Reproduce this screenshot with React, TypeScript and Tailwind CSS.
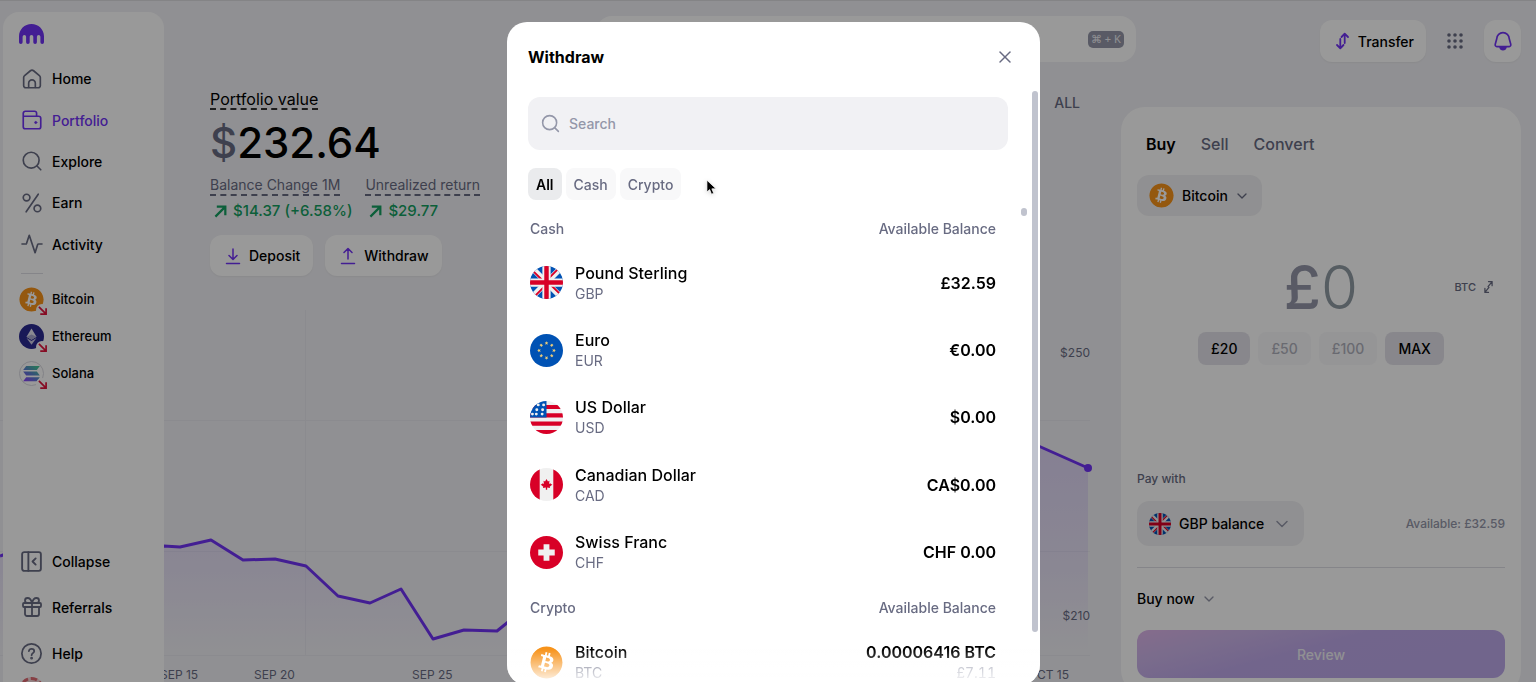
import React, { useId } from "react";
import { ChevronDown, Gift, PanelLeftClose, Search, X } from "lucide-react";
import { FaBitcoin } from "react-icons/fa";

type IconProps = { className?: string };

const stroke = {
  fill: "none",
  stroke: "currentColor",
  strokeWidth: 2,
  strokeLinecap: "round" as const,
  strokeLinejoin: "round" as const,
};

function Logo() {
  return (
    <svg viewBox="0 0 25 20" className="h-5 w-[25px] fill-[#7132f5]" role="img" aria-label="Kraken">
      <path d="M12.5 0C5.6 0 0 5.5 0 12.2v6a1.8 1.8 0 0 0 3.6 0v-5.4a1.75 1.75 0 0 1 3.5 0v5.4a1.8 1.8 0 0 0 3.6 0v-5.4a1.8 1.8 0 0 1 3.6 0v5.4a1.8 1.8 0 0 0 3.6 0v-5.4a1.75 1.75 0 0 1 3.5 0v5.4a1.8 1.8 0 0 0 3.6 0v-6C25 5.500 19.400 0 12.500 0Z" />
    </svg>
  );
}

function HomeIcon({ className }: IconProps) {
  return (
    <svg viewBox="0 0 24 24" className={className} {...stroke}>
      <path d="M2 10.200c0-.9.4-1.700 1.100-2.300l7-5.800a3 3 0 0 1 3.800 0l7 5.800c.7.6 1.100 1.400 1.100 2.300V20a2.500 2.500 0 0 1-2.500 2.500h-15A2.500 2.500 0 0 1 2 20Z" />
      <path d="M8 22v-5a4 4 0 0 1 8 0v5" />
    </svg>
  );
}

function WalletIcon({ className }: IconProps) {
  return (
    <svg viewBox="0 0 24 24" className={className} {...stroke}>
      <path d="M17.500 7.500V4a2.500 2.500 0 0 0-2.500-2.500H4A2.500 2.500 0 0 0 1.500 4v16A2.500 2.500 0 0 0 4 22.500h16a2.500 2.500 0 0 0 2.500-2.500V10A2.500 2.500 0 0 0 20 7.500H2" />
      <circle cx="16.500" cy="15" r="1.300" fill="currentColor" stroke="currentColor" strokeWidth="1" />
    </svg>
  );
}

function ExploreIcon({ className }: IconProps) {
  return (
    <svg viewBox="0 0 24 24" className={className} {...stroke}>
      <circle cx="11" cy="11" r="9.500" />
      <path d="m18 18 4.500 4.500" />
    </svg>
  );
}

function PercentIcon({ className }: IconProps) {
  return (
    <svg viewBox="0 0 24 24" className={className} {...stroke}>
      <circle cx="5.500" cy="5.500" r="4" />
      <circle cx="18.500" cy="18.500" r="4" />
      <path d="M19.500 1.500 5 22.500" />
    </svg>
  );
}

function ActivityIcon({ className }: IconProps) {
  return (
    <svg viewBox="0 0 26 24" className={className} {...stroke}>
      <path d="M1 12h4.500c.6 0 .8-.3 1-.8L9.700 1.500l7 21 3-9.600c.2-.6.5-.9 1.100-.9H25" />
    </svg>
  );
}

function HelpIcon({ className }: IconProps) {
  return (
    <svg viewBox="0 0 24 24" className={className} {...stroke}>
      <circle cx="12" cy="12" r="11" />
      <path d="M9 9.200c.3-1.600 1.500-2.500 3.100-2.500 1.700 0 3 1.100 3 2.600 0 2.200-3 2.300-3 4.600" />
      <circle cx="12.100" cy="17.300" r=".6" fill="currentColor" />
    </svg>
  );
}

function TransferIcon({ className }: IconProps) {
  return (
    <svg viewBox="0 0 14 18" className={className} {...stroke} strokeWidth={1.800}>
      <path d="M4.800 7v8.500M1.500 13l3.300 3.300L8 13M9.200 11V2.500M6 5l3.200-3.300L12.500 5" />
    </svg>
  );
}

function BellIcon({ className }: IconProps) {
  return (
    <svg viewBox="0 0 24 24" className={className} {...stroke}>
      <path d="M12 2a7.500 7.500 0 0 0-7.500 7.300L2.700 16c-.4 1.400.5 2.700 1.900 2.700h14.800c1.400 0 2.300-1.300 1.900-2.700L19.500 9.300A7.500 7.500 0 0 0 12 2Z" />
      <path d="M8.500 19.500a3.600 3.600 0 0 0 7 0Z" fill="currentColor" />
    </svg>
  );
}

function UpRightArrow({ className }: IconProps) {
  return (
    <svg viewBox="0 0 14 14" className={className} fill="none" stroke="currentColor" strokeWidth="2.400">
      <path d="M1.500 12.500 12 2M3 1.800h9.200V11" />
    </svg>
  );
}

function TrayArrow({ up, className }: IconProps & { up?: boolean }) {
  return (
    <svg viewBox="0 0 16 18" className={className} {...stroke} strokeWidth={1.500}>
      <path d={up ? "M8 12V2M4 5.500 8 1.500l4 4" : "M8 2v10M4 8.500l4 4 4-4"} />
      <path d="M1.500 16.500h13" />
    </svg>
  );
}

function BitcoinIcon({ className = "" }: IconProps) {
  return (
    <FaBitcoin
      className={`rounded-full bg-[radial-gradient(white_55%,transparent_56%)] text-[#f7931a] ${className}`}
    />
  );
}

function EthereumIcon() {
  return (
    <svg viewBox="0 0 25 25" className="size-[25px]">
      <circle cx="12.500" cy="12.500" r="12.500" fill="#2b2a92" />
      <path d="M12.500 4.500 7.500 12.800l5 3 5-3Z" fill="#e6e6f2" />
      <path d="m7.500 14 5 6.800 5-6.800-5 3Z" fill="#c9c9e2" />
      <path d="m12.500 10.400-5 2.400 5 3 5-3Z" fill="#a9a9cf" />
    </svg>
  );
}

function SolanaIcon() {
  const id = useId();
  return (
    <svg viewBox="0 0 25 25" className="size-[25px]">
      <defs>
        <linearGradient id={id} x1="5" y1="20" x2="17" y2="5" gradientUnits="userSpaceOnUse">
          <stop offset="0" stopColor="#8a3ffc" />
          <stop offset=".5" stopColor="#5b7fd0" />
          <stop offset="1" stopColor="#45c498" />
        </linearGradient>
      </defs>
      <circle cx="12.500" cy="12.500" r="12" fill="#fff" stroke="#d9d9e0" />
      <g fill={`url(#${id})`}>
        <path d="M7.200 5h13.600l-3 4H4.200Z" />
        <path d="M4.200 10.600h13.600l3 4H7.200Z" />
        <path d="M7.200 16.200h13.600l-3 4H4.200Z" />
      </g>
    </svg>
  );
}

type Country = "gb" | "eu" | "us" | "ca" | "ch";

function Flag({ country, className }: IconProps & { country: Country }) {
  const id = useId();
  return (
    <svg viewBox="0 0 34 34" className={className} aria-hidden="true">
      <clipPath id={id}>
        <circle cx="17" cy="17" r="17" />
      </clipPath>
      <g clipPath={`url(#${id})`}>
        {country === "gb" && (
          <>
            <path d="M0 0h34v34H0z" fill="#0052b4" />
            <path d="m0 0 34 34M34 0 0 34" stroke="#f0f0f0" strokeWidth="6" />
            <path d="m4 6 9 9M28 4l-8 8M30 28l-9-9M6 30l8-8" stroke="#d80027" strokeWidth="2" />
            <path d="M17 0v34M0 17h34" stroke="#f0f0f0" strokeWidth="8.500" />
            <path d="M17 0v34M0 17h34" stroke="#d80027" strokeWidth="4.600" />
          </>
        )}
        {country === "eu" && (
          <>
            <path d="M0 0h34v34H0z" fill="#0052b4" />
            {[0, 45, 90, 135, 180, 225, 270, 315].map((a) => (
              <path
                key={a}
                d="m17 7.600.5 1.100 1.200.1-.9.800.3 1.200-1.100-.6-1.100.6.3-1.200-.9-.8 1.200-.1Z"
                fill="#f5d27a"
                stroke="#f5d27a"
                strokeWidth=".2"
                transform={`rotate(${a} 17 17)`}
              />
            ))}
          </>
        )}
        {country === "us" && (
          <>
            <path d="M0 0h34v34H0z" fill="#f0f0f0" />
            <path d="M0 6.200h34M0 14.800h34M0 23.300h34M0 32h34" stroke="#d80027" strokeWidth="4.300" />
            <path d="M0 0h17v17H0z" fill="#0052b4" />
            {[
              [8.500, 4],
              [14, 4],
              [7, 9],
              [13, 9],
              [6.500, 13.500],
              [12.500, 13.500],
              [2.500, 13.500],
            ].map(([x, y]) => (
              <circle key={`${x}-${y}`} cx={x} cy={y} r="1.500" fill="#f0f0f0" />
            ))}
          </>
        )}
        {country === "ca" && (
          <>
            <path d="M0 0h34v34H0z" fill="#f0f0f0" />
            <path d="M0 0h10v34H0zM24 0h10v34H24z" fill="#d80027" />
            <path
              d="m17 11.300 1.500 2.700 1.600-.8-.5 3.300 1.600-1.100v1l1.900.7-2.800 2.300.4 1.200-3-.4v2.200h-1.400v-2.200l-3 .4.400-1.200-2.800-2.300 1.900-.7v-1l1.600 1.100-.5-3.300 1.600.8Z"
              fill="#d80027"
            />
          </>
        )}
        {country === "ch" && (
          <>
            <path d="M0 0h34v34H0z" fill="#d80027" />
            <path d="M14 8.500h6V14h5.500v6H20v5.500h-6V20H8.500v-6H14Z" fill="#f0f0f0" />
          </>
        )}
      </g>
    </svg>
  );
}

const navItems = [
  { label: "Home", Icon: HomeIcon },
  { label: "Portfolio", Icon: WalletIcon, active: true },
  { label: "Explore", Icon: ExploreIcon },
  { label: "Earn", Icon: PercentIcon },
  { label: "Activity", Icon: ActivityIcon },
];

const watchlist = [
  { label: "Bitcoin", icon: <BitcoinIcon className="size-[25px]" /> },
  { label: "Ethereum", icon: <EthereumIcon /> },
  { label: "Solana", icon: <SolanaIcon /> },
];

const footerItems = [
  { label: "Collapse", Icon: PanelLeftClose, size: "size-[25px]" },
  { label: "Referrals", Icon: Gift, size: "size-6" },
  { label: "Help", Icon: HelpIcon, size: "size-[21px]" },
];

function Sidebar() {
  return (
    <aside className="relative z-10 mt-[11px] ml-[3px] flex w-[161px] shrink-0 flex-col overflow-hidden rounded-t-2xl bg-white pt-3 pl-4">
      <a href="#" className="block w-fit">
        <Logo />
      </a>
      <nav className="mt-[14px] grid h-[207px] shrink-0 grid-rows-5" aria-label="Main">
        {navItems.map(({ label, Icon, active }) => (
          <a
            key={label}
            href="#"
            className={`flex items-center gap-2 text-[14px] font-medium ${active ? "text-[#7132f5]" : "text-black"}`}
          >
            <span className={`flex w-[25px] justify-center ${active ? "" : "text-[#686b82]"}`}>
              <Icon className={Icon === ActivityIcon ? "h-5 w-[22px]" : "size-5"} />
            </span>
            {label}
          </a>
        ))}
      </nav>
      <hr className="mt-2 ml-[2px] w-[22px] border-[#dedee5]" />
      <ul className="mt-[7px]">
        {watchlist.map(({ label, icon }) => (
          <li key={label} className="flex h-[37px] items-center gap-2 text-[13px] font-medium">
            <span className="relative">
              {icon}
              <span className="absolute -right-1 -bottom-1 flex size-3 items-center justify-center rounded-full bg-white text-[#e0143c]">
                <svg viewBox="0 0 10 10" className="size-[9px]" fill="none" stroke="currentColor" strokeWidth="1.900">
                  <path d="m1 1 7.500 7.500M9 2.500V9H2.500" />
                </svg>
              </span>
            </span>
            {label}
          </li>
        ))}
      </ul>
      <div className="mt-auto shrink-0">
        {footerItems.map(({ label, Icon, size }) => (
          <a key={label} href="#" className="flex h-[46px] items-center gap-2 text-[14px] font-medium">
            <span className="flex w-[25px] justify-center text-[#686b82]">
              <Icon className={size} strokeWidth={1.800} />
            </span>
            {label}
          </a>
        ))}
        <div className="h-[6px] overflow-hidden">
          <div className="mt-px size-[25px] rounded-full border-[3px] border-dashed border-[#e06a72] bg-[#f6d9da]" />
        </div>
      </div>
    </aside>
  );
}

function TopBar() {
  return (
    <header className="flex items-end pt-[15px] pr-[15px]">
      <div className="mr-[184px] ml-auto flex h-[46px] w-[540px] items-center justify-end rounded-2xl bg-white pr-3">
        <kbd className="flex h-[17px] items-center rounded-[5px] bg-[#9497a9] px-[3px] font-sans text-[11px] text-[#f1f1f5]">
          ⌘ + K
        </kbd>
      </div>
      <button className="flex h-[42px] items-center gap-2 rounded-xl bg-white pr-3 pl-[15px] text-[14px] font-medium shadow-xs">
        <TransferIcon className="h-[18px] w-[15px] text-[#7132f5]" />
        Transfer
      </button>
      <button aria-label="Apps" className="ml-[20px] flex h-[42px] items-center">
        <svg viewBox="0 0 18 18" className="size-[18px] fill-[#686b82]">
          {[3, 9, 15].map((y) => [3, 9, 15].map((x) => <circle key={`${x}-${y}`} cx={x} cy={y} r="1.800" />))}
        </svg>
      </button>
      <button
        aria-label="Notifications"
        className="ml-[20px] flex h-[42px] w-[37px] items-center justify-center rounded-xl bg-white shadow-xs"
      >
        <BellIcon className="size-5 text-[#7132f5]" />
      </button>
    </header>
  );
}

const line =
  "0,556 3,555 60,538 120,549 164,546 180,547 211,540 243,560 275,559 306,566 338,596 370,603 401,589 433,639 464,630 497,631 528,606 700,520 900,470 1025,440 1088,468";

function PortfolioChart() {
  const id = useId();
  return (
    <svg
      viewBox="0 310 1121 372"
      className="-ml-[164px] block w-[calc(100%+164px)] shrink-0"
      role="img"
      aria-label="Portfolio value over one month"
    >
      <defs>
        <linearGradient id={id} x1="0" y1="440" x2="0" y2="656" gradientUnits="userSpaceOnUse">
          <stop offset="0" stopColor="#7132f5" stopOpacity=".15" />
          <stop offset=".6" stopColor="#7132f5" stopOpacity=".08" />
          <stop offset="1" stopColor="#7132f5" stopOpacity="0" />
        </linearGradient>
      </defs>
      <path d="M0 420.500h1090M0 551.500h1090M0 655.500h1090M305.500 310v346" stroke="#e8e8ee" />
      <polygon points={`0,656 ${line} 1088,656`} fill={`url(#${id})`} />
      <polyline points={line} fill="none" stroke="#7132f5" strokeWidth="3" strokeLinejoin="round" />
      <circle cx="1088" cy="468" r="4" fill="#7132f5" />
      <g className="fill-[#686b82] text-[12px]">
        <text x="160" y="679">SEP 15</text>
        <text x="254" y="679">SEP 20</text>
        <text x="412" y="679">SEP 25</text>
        <text x="1069" y="679" textAnchor="end">OCT 15</text>
        <text x="1090" y="357" textAnchor="end">$250</text>
        <text x="1090" y="620" textAnchor="end">$210</text>
      </g>
    </svg>
  );
}

function Portfolio() {
  return (
    <section className="flex min-w-0 flex-1 flex-col">
      <div className="flex items-start justify-between pt-7 pr-[41px] pb-[34px] pl-[46px]">
        <div>
          <h1 className="w-fit border-b-2 border-dashed border-[#333] text-[16px] leading-[18px]">Portfolio value</h1>
          <p className="mt-2 text-[42px] leading-[50px] font-medium">
            <span className="text-[#686b82]">$</span>232.64
          </p>
          <div className="mt-2 flex gap-[13px]">
            <div>
              <h2 className="w-fit border-b-2 border-dashed border-[#686b82] text-[14px] leading-[18px] text-[#686b82]">
                Balance Change 1M
              </h2>
              <p className="mt-[5px] flex items-center gap-[6px] pl-1 text-[15px] leading-5 font-medium text-[#149e61]">
                <UpRightArrow className="size-[13px]" />
                $14.37 (+6.58%)
              </p>
            </div>
            <div>
              <h2 className="w-fit border-b-2 border-dashed border-[#686b82] text-[14px] leading-[18px] text-[#686b82]">
                Unrealized return
              </h2>
              <p className="mt-[5px] flex items-center gap-[6px] pl-1 text-[15px] leading-5 font-medium text-[#149e61]">
                <UpRightArrow className="size-[13px]" />
                $29.77
              </p>
            </div>
          </div>
          <div className="mt-[14px] flex gap-3">
            <button className="flex h-[41px] items-center gap-2 rounded-xl bg-white pr-[13px] pl-[15px] text-[14px] font-medium shadow-xs">
              <TrayArrow className="h-[18px] w-4 text-[#7132f5]" />
              Deposit
            </button>
            <button className="flex h-[41px] items-center gap-2 rounded-xl bg-white pr-[13px] pl-[15px] text-[14px] font-medium shadow-xs">
              <TrayArrow up className="h-[18px] w-4 text-[#7132f5]" />
              Withdraw
            </button>
          </div>
        </div>
        <button className="mt-1 text-[14px] leading-[18px] font-medium text-[#686b82]">ALL</button>
      </div>
      <PortfolioChart />
    </section>
  );
}

const amounts = [
  { label: "£20", enabled: true },
  { label: "£50", enabled: false },
  { label: "£100", enabled: false },
  { label: "MAX", enabled: true },
];

function TradePanel() {
  return (
    <section className="mt-[45px] mr-[15px] h-fit w-[400px] shrink-0 rounded-3xl bg-white p-4">
      <div className="mt-[11px] flex gap-[25px] pl-[9px] text-[16px] leading-5 font-medium text-[#686b82]">
        <button className="font-semibold text-black">Buy</button>
        <button>Sell</button>
        <button>Convert</button>
      </div>
      <button className="mt-[21px] flex h-[41px] items-center gap-2 rounded-xl bg-[#f1f1f3] px-3 text-[14px] font-medium">
        <BitcoinIcon className="size-[25px]" />
        Bitcoin
        <ChevronDown className="-ml-[2px] size-4 text-[#686b82]" />
      </button>
      <div className="mt-9 grid grid-cols-[1fr_auto_1fr] items-center">
        <p className="col-start-2 text-[60px] leading-[70px] text-[#9497a9]">
          <span className="font-medium">£</span>
          <span className="font-light text-[#909ba3]">0</span>
        </p>
        <button className="mr-3 flex items-center gap-2 justify-self-end text-[11px] font-medium text-[#686b82]">
          BTC
          <svg viewBox="0 0 10 14" className="h-[14px] w-[9px]" {...stroke} strokeWidth={1.400}>
            <path d="M5 1h4v4.500M9 1 4.500 6.500M5 13H1V8.500M1 13l4.500-5.500" />
          </svg>
        </button>
      </div>
      <div className="mt-[10px] flex justify-center gap-2">
        {amounts.map(({ label, enabled }) => (
          <button
            key={label}
            disabled={!enabled}
            className={`h-[33px] rounded-lg px-[13px] text-[14px] font-medium ${enabled ? "bg-[#e3e2e9] text-black" : "bg-[#f9f9fb] text-[#b0b1bc]"}`}
          >
            {label}
          </button>
        ))}
      </div>
      <p className="mt-[105px] text-[12px] leading-[18px] font-medium text-[#686b82]">Pay with</p>
      <div className="mt-[13px] flex items-center justify-between">
        <button className="flex h-[45px] items-center gap-2 rounded-xl bg-[#f1f1f3] px-3 text-[14px] font-medium">
          <Flag country="gb" className="size-[22px]" />
          GBP balance
          <ChevronDown className="size-5 text-[#9497a9]" strokeWidth={1.800} />
        </button>
        <p className="text-[12px] font-medium text-[#9497a9]">Available: £32.59</p>
      </div>
      <hr className="mt-[21px] border-[#dedee5]" />
      <button className="mt-[21px] flex items-center gap-[6px] text-[14px] leading-5 font-medium">
        Buy now
        <ChevronDown className="size-4 text-[#9497a9]" />
      </button>
      <button
        disabled
        className="mt-[21px] h-12 w-full rounded-xl bg-[linear-gradient(165deg,#deb4ea_0%,#cdb5ea_20%,#bea8ea_45%,#bca8ea_100%)] text-[14px] font-medium text-[#f1f1f5]"
      >
        Review
      </button>
    </section>
  );
}

const cash: { name: string; code: string; balance: string; flag: Country }[] = [
  { name: "Pound Sterling", code: "GBP", balance: "£32.59", flag: "gb" },
  { name: "Euro", code: "EUR", balance: "€0.00", flag: "eu" },
  { name: "US Dollar", code: "USD", balance: "$0.00", flag: "us" },
  { name: "Canadian Dollar", code: "CAD", balance: "CA$0.00", flag: "ca" },
  { name: "Swiss Franc", code: "CHF", balance: "CHF 0.00", flag: "ch" },
];

function GroupHeading({ title }: { title: string }) {
  return (
    <div className="flex justify-between text-[14px] leading-5 font-medium text-[#686b82]">
      <h3>{title}</h3>
      <span>Available Balance</span>
    </div>
  );
}

function WithdrawDialog() {
  return (
    <div
      role="dialog"
      aria-modal="true"
      aria-labelledby="withdraw-title"
      className="relative flex h-[calc(100vh-19px)] w-[533px] flex-col overflow-hidden rounded-[20px] bg-white pt-[25px] pr-8 pl-[21px]"
    >
      <div className="flex items-center justify-between">
        <h2 id="withdraw-title" className="text-[16px] leading-5 font-bold">
          Withdraw
        </h2>
        <button aria-label="Close" className="mr-[-7px] text-[#686b82]">
          <X className="size-5" strokeWidth={1.800} />
        </button>
      </div>
      <label className="mt-[30px] flex h-[53px] shrink-0 items-center gap-2 rounded-xl bg-[#f1f1f4] px-3">
        <Search className="size-[21px] shrink-0 text-[#9497a9]" strokeWidth={1.800} />
        <input
          type="text"
          placeholder="Search"
          aria-label="Search assets"
          className="w-full bg-transparent text-[14px] font-medium outline-none placeholder:text-[#9497a9]"
        />
      </label>
      <div className="mt-[18px] flex gap-1 text-[14px] font-medium text-[#686b82]">
        <button className="h-8 rounded-lg bg-[#eaebed] px-2 font-semibold text-black">All</button>
        <button className="h-8 rounded-lg bg-[#f8f8f9] px-2">Cash</button>
        <button className="h-8 rounded-lg bg-[#f8f8f9] px-2">Crypto</button>
      </div>
      <div className="mt-[19px] mr-3 ml-[2px] shrink-0">
        <GroupHeading title="Cash" />
        <ul className="mt-[10px] grid h-[337px] grid-rows-5">
          {cash.map(({ name, code, balance, flag }) => (
            <li key={code} className="grid">
              <button className="flex items-center gap-3 text-left">
                <Flag country={flag} className="size-[33px]" />
                <span className="flex-1">
                  <span className="block text-[16px] leading-[22px] font-medium">{name}</span>
                  <span className="block text-[14px] leading-5 text-[#686b82]">{code}</span>
                </span>
                <span className="text-[16px] font-semibold">{balance}</span>
              </button>
            </li>
          ))}
        </ul>
        <div className="mt-3">
          <GroupHeading title="Crypto" />
        </div>
        <button className="mt-[23px] flex w-full items-center gap-3 text-left">
          <BitcoinIcon className="size-[33px]" />
          <span className="flex-1">
            <span className="block text-[16px] leading-[22px] font-medium">Bitcoin</span>
            <span className="block text-[14px] leading-5 text-[#686b82]">BTC</span>
          </span>
          <span className="text-right">
            <span className="block text-[16px] leading-[22px] font-semibold">0.00006416 BTC</span>
            <span className="block text-[14px] leading-5 text-[#9497a9] tabular-nums">£7.11</span>
          </span>
        </button>
      </div>
      <div className="pointer-events-none absolute inset-x-0 bottom-0 h-9 bg-linear-to-t from-white to-transparent" />
      <div className="absolute top-[69px] right-[2px] h-[541px] w-[6px] rounded-full bg-[#c0c3ce]" />
      <div className="absolute top-[186px] right-[13px] h-2 w-[6px] rounded-full bg-[#c0c3ce]" />
      <svg viewBox="0 0 12 18" className="absolute top-[157px] left-[199px] h-[17px] w-[11px] drop-shadow-sm">
        <path d="M1 1v13l3-2.700 2 5 2.400-1-2-4.800H11Z" fill="#000" stroke="#fff" strokeWidth=".8" />
      </svg>
    </div>
  );
}

export default function App() {
  return (
    <div className="relative h-screen overflow-hidden border-t border-[#dcdce0] bg-[#f1f1f5] font-['Inter','Liberation_Sans',sans-serif] text-black">
      <div className="flex h-full">
        <Sidebar />
        <div className="flex min-w-0 flex-1 flex-col">
          <TopBar />
          <main className="flex min-h-0 flex-1">
            <Portfolio />
            <TradePanel />
          </main>
        </div>
      </div>
      <div className="fixed inset-0 z-20 flex items-start justify-center bg-black/40 pt-[22px] pl-[11px]">
        <WithdrawDialog />
      </div>
    </div>
  );
}
